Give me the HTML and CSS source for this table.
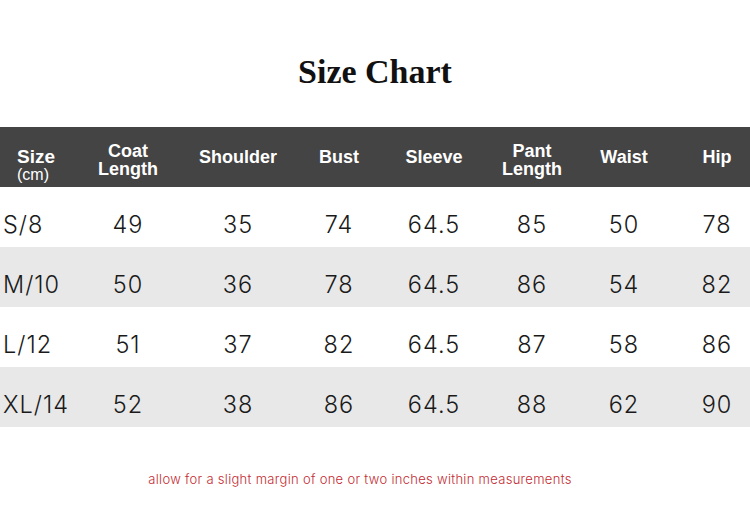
FILE: index.html
```html
<!DOCTYPE html>
<html lang="en">
<head>
<meta charset="utf-8">
<title>Size Chart</title>
<link rel="stylesheet" href="styles.css">
</head>
<body>
<div class="page">
  <h1 class="title">Size Chart</h1>
  <div class="chart">
    <div class="row head">
      <div class="cell first"><span class="size-lbl">Size</span><span class="unit">(cm)</span></div>
      <div class="cell two">Coat<br>Length</div>
      <div class="cell">Shoulder</div>
      <div class="cell">Bust</div>
      <div class="cell">Sleeve</div>
      <div class="cell two">Pant<br>Length</div>
      <div class="cell">Waist</div>
      <div class="cell last">Hip</div>
    </div>
    <div class="row data">
      <div class="cell first">S/8</div><div class="cell">49</div><div class="cell">35</div><div class="cell">74</div><div class="cell">64.5</div><div class="cell">85</div><div class="cell">50</div><div class="cell last">78</div>
    </div>
    <div class="row data alt">
      <div class="cell first">M/10</div><div class="cell">50</div><div class="cell">36</div><div class="cell">78</div><div class="cell">64.5</div><div class="cell">86</div><div class="cell">54</div><div class="cell last">82</div>
    </div>
    <div class="row data">
      <div class="cell first">L/12</div><div class="cell">51</div><div class="cell">37</div><div class="cell">82</div><div class="cell">64.5</div><div class="cell">87</div><div class="cell">58</div><div class="cell last">86</div>
    </div>
    <div class="row data alt">
      <div class="cell first">XL/14</div><div class="cell">52</div><div class="cell">38</div><div class="cell">86</div><div class="cell">64.5</div><div class="cell">88</div><div class="cell">62</div><div class="cell last">90</div>
    </div>
  </div>
  <p class="note">allow for a slight margin of one or two inches within measurements</p>
</div>
</body>
</html>
```

FILE: styles.css
```css
* { box-sizing: border-box; }
html, body { margin: 0; padding: 0; background: #ffffff; }
body { width: 750px; height: 520px; overflow: hidden; font-family: "Liberation Sans", Arial, sans-serif; }

.page { display: flex; flex-direction: column; }

.title {
  margin: 0;
  padding-top: 52px;
  height: 127px;
  font-family: "Liberation Serif", "Times New Roman", serif;
  font-weight: bold;
  font-size: 34px;
  line-height: 40px;
  text-align: center;
  color: #111;
}

.chart { display: flex; flex-direction: column; }

.row {
  display: grid;
  grid-template-columns: 78px 100px 120px 82px 108px 88px 96px 78px;
  height: 60px;
}

.cell { text-align: center; }
.cell.last { padding-left: 12px; }

.head { background: #444444; color: #ffffff; }
.head .cell {
  font-weight: bold;
  font-size: 18px;
  line-height: 18px;
  display: flex;
  flex-direction: column;
  justify-content: center;
  align-items: center;
}
.head .cell.two { padding-top: 6px; }
.head .cell.first {
  justify-content: flex-start;
  align-items: flex-start;
  padding-top: 21px;
  padding-left: 17px;
  text-align: left;
}
.size-lbl { display: block; font-size: 19px; line-height: 18px; }
.unit { display: block; font-weight: normal; font-size: 16px; line-height: 18px; }

.data { background: #ffffff; color: #1a1a1a; }
.data.alt { background: #e8e8e8; }
.data .cell {
  font-family: Inter, "Liberation Sans", sans-serif;
  font-weight: 300;
  font-size: 23.5px;
  letter-spacing: 1px;
  line-height: 46px;
  padding-top: 15px;
}
.data .cell.first { text-align: left; padding-left: 3px; }

.note {
  margin: 44px 0 0;
  padding-right: 30px;
  font-family: Inter, "Liberation Sans", sans-serif;
  font-weight: 300;
  font-size: 13px;
  letter-spacing: 0.3px;
  line-height: 16px;
  text-align: center;
  color: #c42a32;
}
```
